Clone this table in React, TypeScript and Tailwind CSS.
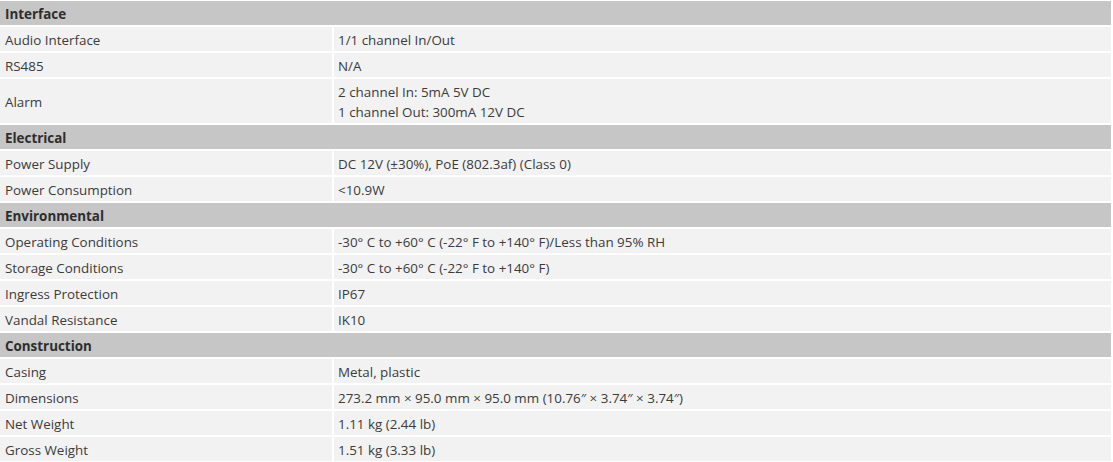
type Row = { label: string; value: string[] };
type Section = { title: string; rows: Row[] };

const sections: Section[] = [
  {
    title: "Interface",
    rows: [
      { label: "Audio Interface", value: ["1/1 channel In/Out"] },
      { label: "RS485", value: ["N/A"] },
      { label: "Alarm", value: ["2 channel In: 5mA 5V DC", "1 channel Out: 300mA 12V DC"] },
    ],
  },
  {
    title: "Electrical",
    rows: [
      { label: "Power Supply", value: ["DC 12V (±30%), PoE (802.3af) (Class 0)"] },
      { label: "Power Consumption", value: ["<10.9W"] },
    ],
  },
  {
    title: "Environmental",
    rows: [
      { label: "Operating Conditions", value: ["-30° C to +60° C (-22° F to +140° F)/Less than 95% RH"] },
      { label: "Storage Conditions", value: ["-30° C to +60° C (-22° F to +140° F)"] },
      { label: "Ingress Protection", value: ["IP67"] },
      { label: "Vandal Resistance", value: ["IK10"] },
    ],
  },
  {
    title: "Construction",
    rows: [
      { label: "Casing", value: ["Metal, plastic"] },
      { label: "Dimensions", value: ["273.2 mm × 95.0 mm × 95.0 mm (10.76″ × 3.74″ × 3.74″)"] },
      { label: "Net Weight", value: ["1.11 kg (2.44 lb)"] },
      { label: "Gross Weight", value: ["1.51 kg (3.33 lb)"] },
    ],
  },
];

export default function App() {
  return (
    <div className="w-[1113px] h-[462px] overflow-hidden bg-white pt-[1px] font-['Open_Sans',sans-serif] text-[13.4px] text-[#3b3b3b]">
      <div className="flex w-[1111px] flex-col gap-[2px]">
        {sections.map((s) => (
          <div key={s.title} className="flex flex-col gap-[2px]">
            <div className="flex h-[24px] items-center bg-[#c5c6c5] px-[5px] pt-[2px] font-bold text-[#2e2e2e]">
              {s.title}
            </div>
            {s.rows.map((r) => (
              <div key={r.label} className="flex gap-[2px]">
                <div
                  className={`flex w-[332px] shrink-0 items-center bg-[#f2f2f2] px-[5px] pt-[2px] ${
                    r.value.length > 1 ? "h-[44px]" : "h-[24px]"
                  }`}
                >
                  {r.label}
                </div>
                <div className="flex flex-1 flex-col justify-center bg-[#f2f2f2] px-[4px] pt-[2px] leading-[20px]">
                  {r.value.map((v) => (
                    <span key={v}>{v}</span>
                  ))}
                </div>
              </div>
            ))}
          </div>
        ))}
      </div>
    </div>
  );
}
